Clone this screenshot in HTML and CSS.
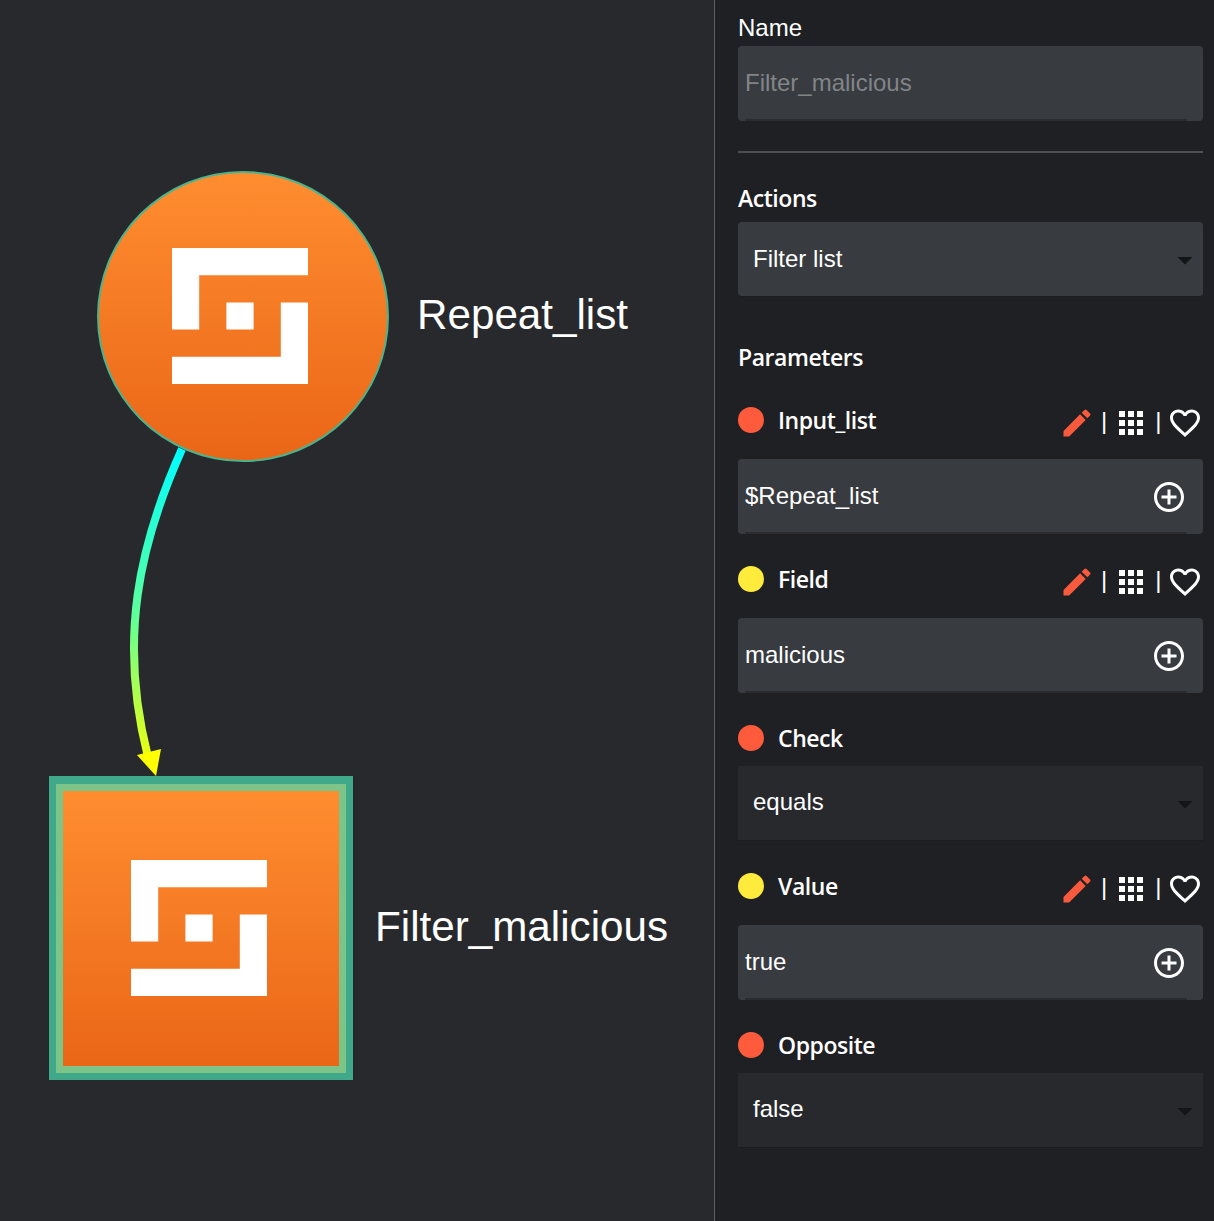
FILE: index.html
```html
<!DOCTYPE html>
<html lang="en">
<head>
<meta charset="UTF-8">
<title>Workflow editor</title>
<link rel="stylesheet" href="styles.css">
</head>
<body>
<svg width="0" height="0" class="defs">
  <symbol id="logo" viewBox="0 0 5 5">
    <path d="M0 0h5v1H1v2H0zM2 2h1v1H2zM4 2h1v3H0V4h4z" fill="#fff"/>
  </symbol>
  <symbol id="i-edit" viewBox="0 0 24 24">
    <path d="M3 17.25V21h3.75L17.81 9.94l-3.75-3.75L3 17.25zM20.71 7.04c.39-.39.39-1.02 0-1.41l-2.34-2.34a.9959.9959 0 00-1.41 0l-1.83 1.83 3.75 3.75 1.83-1.83z" fill="#f85a3e"/>
  </symbol>
  <symbol id="i-apps" viewBox="0 0 24 24">
    <path d="M4 8h4V4H4v4zm6 12h4v-4h-4v4zm-6 0h4v-4H4v4zm0-6h4v-4H4v4zm6 0h4v-4h-4v4zm6-10v4h4V4h-4zm-6 4h4V4h-4v4zm6 6h4v-4h-4v4zm0 6h4v-4h-4v4z" fill="#fff"/>
  </symbol>
  <symbol id="i-heart" viewBox="0 0 24 24">
    <path d="M16.5 3c-1.74 0-3.41.81-4.5 2.09C10.91 3.81 9.24 3 7.5 3 4.42 3 2 5.42 2 8.5c0 3.78 3.4 6.86 8.55 11.54L12 21.35l1.45-1.32C18.6 15.36 22 12.28 22 8.5 22 5.42 19.58 3 16.5 3zm-4.4 15.55l-.1.1-.1-.1C7.14 14.24 4 11.39 4 8.5 4 6.5 5.5 5 7.5 5c1.54 0 3.04.99 3.57 2.36h1.87C13.46 5.99 14.96 5 16.5 5c2 0 3.5 1.5 3.5 3.5 0 2.89-3.14 5.74-7.9 10.05z" fill="#fff"/>
  </symbol>
  <symbol id="i-add" viewBox="0 0 24 24">
    <path d="M13 7h-2v4H7v2h4v4h2v-4h4v-2h-4V7zm-1-5C6.49 2 2 6.49 2 12s4.49 10 10 10 10-4.49 10-10S17.51 2 12 2zm0 18c-4.41 0-8-3.59-8-8s3.59-8 8-8 8 3.59 8 8-3.59 8-8 8z" fill="#fff"/>
  </symbol>
  <symbol id="i-caret" viewBox="0 0 24 24">
    <path d="M7 10l5 5 5-5z" fill="#141517"/>
  </symbol>
</svg>

<div class="app">
  <div class="canvas">
    <svg class="edges" width="714" height="1221">
      <defs>
        <linearGradient id="edgeGrad" gradientUnits="userSpaceOnUse" x1="0" y1="449" x2="0" y2="776">
          <stop offset="0" stop-color="#00ffff"/>
          <stop offset="0.5" stop-color="#5cff9c"/>
          <stop offset="1" stop-color="#ffff00"/>
        </linearGradient>
      </defs>
      <path d="M182 449C139 545 118 640 148 757" fill="none" stroke="url(#edgeGrad)" stroke-width="8"/>
      <path d="M156 776L137 755L161 749z" fill="#ffff00"/>
    </svg>

    <div class="node node-trigger">
      <svg class="node-logo"><use href="#logo"/></svg>
    </div>
    <div class="node-label label-trigger">Repeat_list</div>

    <div class="node node-action">
      <svg class="node-logo"><use href="#logo"/></svg>
    </div>
    <div class="node-label label-action">Filter_malicious</div>
  </div>

  <div class="panel">
    <div class="title-plain">Name</div>
    <div class="control placeholder">Filter_malicious</div>
    <hr class="divider">

    <div class="title title-actions">Actions</div>
    <div class="select">Filter list<svg class="caret"><use href="#i-caret"/></svg></div>

    <div class="title title-params">Parameters</div>

    <div class="row row-first">
      <span class="dot dot-red"></span><span class="row-name">Input_list</span>
      <div class="tools">
        <svg class="icon"><use href="#i-edit"/></svg><span class="sep">|</span>
        <svg class="icon"><use href="#i-apps"/></svg><span class="sep">|</span>
        <svg class="icon"><use href="#i-heart"/></svg>
      </div>
    </div>
    <div class="control">$Repeat_list<svg class="icon add"><use href="#i-add"/></svg></div>

    <div class="row">
      <span class="dot dot-yellow"></span><span class="row-name">Field</span>
      <div class="tools">
        <svg class="icon"><use href="#i-edit"/></svg><span class="sep">|</span>
        <svg class="icon"><use href="#i-apps"/></svg><span class="sep">|</span>
        <svg class="icon"><use href="#i-heart"/></svg>
      </div>
    </div>
    <div class="control">malicious<svg class="icon add"><use href="#i-add"/></svg></div>

    <div class="row row-select">
      <span class="dot dot-red"></span><span class="row-name">Check</span>
    </div>
    <div class="select select-dark">equals<svg class="caret"><use href="#i-caret"/></svg></div>

    <div class="row">
      <span class="dot dot-yellow"></span><span class="row-name">Value</span>
      <div class="tools">
        <svg class="icon"><use href="#i-edit"/></svg><span class="sep">|</span>
        <svg class="icon"><use href="#i-apps"/></svg><span class="sep">|</span>
        <svg class="icon"><use href="#i-heart"/></svg>
      </div>
    </div>
    <div class="control">true<svg class="icon add"><use href="#i-add"/></svg></div>

    <div class="row row-select">
      <span class="dot dot-red"></span><span class="row-name">Opposite</span>
    </div>
    <div class="select select-dark">false<svg class="caret"><use href="#i-caret"/></svg></div>
  </div>
</div>
</body>
</html>
```

FILE: styles.css
```css
html, body {
  margin: 0;
  height: 100%;
  background: #27292d;
  overflow: hidden;
}
body {
  font-family: "Liberation Sans", Arial, sans-serif;
  font-size: 24px;
  color: #fff;
}
.defs {
  position: absolute;
}
.app {
  display: flex;
  height: 1221px;
}

/* graph canvas, nodes sit on a free canvas */
.canvas {
  position: relative;
  width: 714px;
  flex: none;
  background: #27292d;
}
.edges {
  position: absolute;
  left: 0;
  top: 0;
}
.node {
  position: absolute;
  box-sizing: border-box;
  display: flex;
  align-items: center;
  justify-content: center;
  background: linear-gradient(#ff8d30, #ea6617);
}
.node-trigger {
  left: 97px;
  top: 171px;
  width: 292px;
  height: 291px;
  border-radius: 50%;
  border: 2px solid #4db38c;
}
.node-action {
  left: 63px;
  top: 791px;
  width: 276px;
  height: 275px;
  outline: 7px solid #7dc488;
  box-shadow: 0 0 0 14px #3fa98a, 0 -1px 0 14px #3fa98a;
}
.node-logo {
  width: 136px;
  height: 136px;
}
.node-trigger .node-logo {
  margin: 0 6px 2px 0;
}
.node-action .node-logo {
  margin: 0 4px 1px 0;
}
.node-label {
  position: absolute;
  font-size: 42.2px;
  line-height: 50px;
  white-space: nowrap;
}
.label-trigger {
  left: 417px;
  top: 290px;
}
.label-action {
  left: 375px;
  top: 902px;
}

/* right panel */
.panel {
  flex: 1;
  box-sizing: border-box;
  background: #1f2023;
  border-left: 1px solid #5c5f64;
  padding: 14px 11px 0 23px;
}
.title-plain, .title {
  height: 28px;
  line-height: 28px;
}
.title-plain {
  margin-bottom: 4px;
}
.title, .row-name {
  font-family: "Open Sans", sans-serif;
  font-weight: 600;
  font-size: 23px;
  letter-spacing: -0.45px;
}
.title-actions {
  margin-top: 31px;
  margin-bottom: 10px;
}
.title-params {
  margin-top: 46px;
}
.divider {
  height: 2px;
  margin: 30px 0 0;
  border: 0;
  background: #4b4e53;
}
.control, .select {
  position: relative;
  box-sizing: border-box;
  height: 75px;
  display: flex;
  align-items: center;
  background: #383b40;
  border-radius: 4px;
  padding-bottom: 1px;
}
.control {
  padding-left: 7px;
}
.control::after {
  content: "";
  position: absolute;
  left: 7px;
  right: 16px;
  bottom: 0;
  height: 2px;
  background: #2a2c30;
}
.placeholder {
  color: #828588;
}
.select {
  padding-left: 15px;
  border-bottom: 1px solid #1b1c1e;
}
.select-dark {
  background: #27292d;
  border-radius: 0;
}
.caret {
  position: absolute;
  right: 0;
  top: 20px;
  width: 36px;
  height: 36px;
}
.row {
  display: flex;
  align-items: center;
  height: 36px;
  margin-top: 30px;
  margin-bottom: 18px;
}
.row-first {
  margin-top: 33.5px;
}
.row-select {
  margin-bottom: 7px;
}
.dot {
  width: 26px;
  height: 26px;
  border-radius: 50%;
  margin-right: 14px;
  margin-bottom: 5px;
  flex: none;
}
.dot-red {
  background: #fe5a3c;
}
.dot-yellow {
  background: #ffeb3b;
}
.row-name {
  padding-bottom: 6px;
}
.tools {
  margin-left: auto;
  display: flex;
  align-items: center;
}
.icon {
  width: 36px;
  height: 36px;
  flex: none;
}
.sep {
  margin: 0 5.5px 4px 6.5px;
  font-size: 24px;
  line-height: 28px;
}
.add {
  position: absolute;
  right: 16px;
  top: 20px;
}
```
